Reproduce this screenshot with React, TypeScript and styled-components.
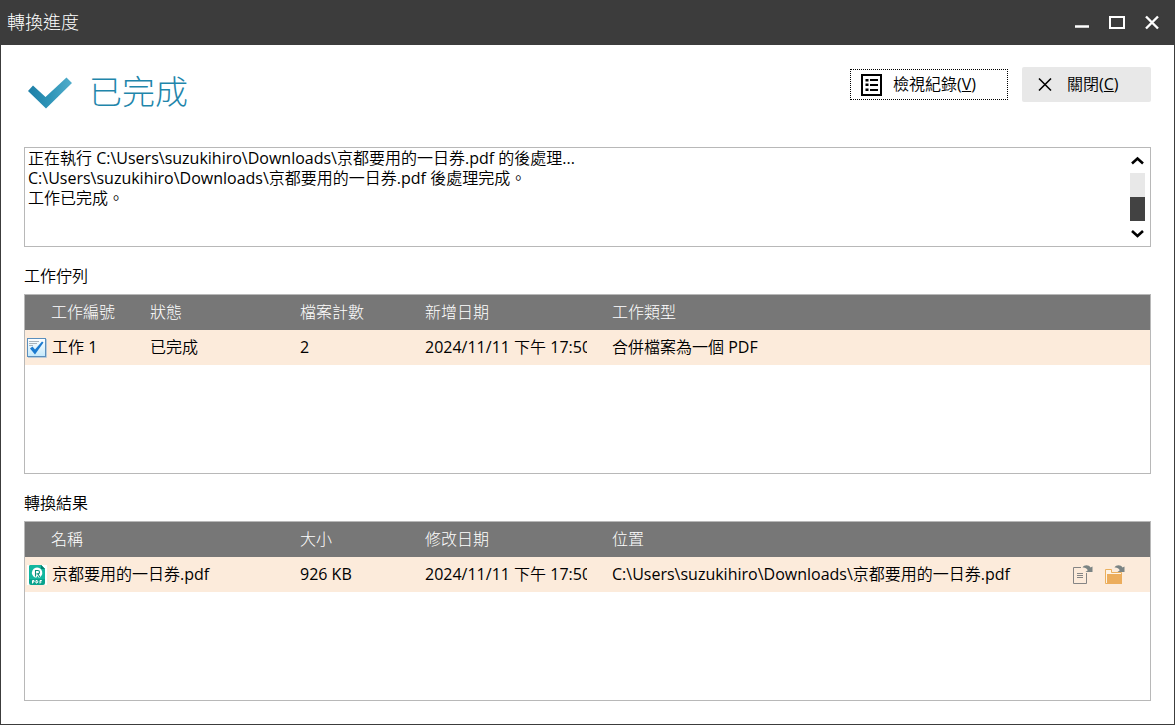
import React from "react";
import styled, { createGlobalStyle } from "styled-components";

const GlobalStyle = createGlobalStyle`
  *, *::before, *::after { box-sizing: border-box; }
  body { margin: 0; background: #fff; }
  body, button, table {
    font-family: "Open Sans", "Noto Sans CJK TC", sans-serif;
    font-size: 16px;
    font-weight: 350;
    color: #000;
  }
`;

const Window = styled.div`
  min-height: 100vh;
  display: flex;
  flex-direction: column;
  border: 1px solid #3c3c3c;
  border-top: 0;
`;

const TitleBar = styled.header`
  height: 45px;
  flex: none;
  display: flex;
  align-items: center;
  justify-content: space-between;
  padding: 0 12px 0 6px;
  background: #3c3c3c;
`;

const WindowTitle = styled.h1`
  margin: 0;
  padding-bottom: 2px;
  font-size: 18px;
  font-weight: 300;
  line-height: 24px;
  color: #fff;
`;

const WindowControls = styled.div`
  display: flex;
  gap: 15px;
`;

const WindowButton = styled.button`
  display: block;
  width: 20px;
  height: 20px;
  padding: 0;
  border: 0;
  background: none;
  svg { display: block; }
`;

const Content = styled.main`
  flex: 1;
  display: flex;
  flex-direction: column;
  padding: 0 23px 23px;
`;

const StatusBar = styled.div`
  height: 102px;
  flex: none;
  display: flex;
  align-items: flex-start;
  justify-content: space-between;
  padding-top: 22px;
`;

const Status = styled.div`
  display: flex;
  align-items: center;
  gap: 17px;
  padding-left: 4px;
`;

const StatusText = styled.h2`
  margin: 0;
  font-size: 33px;
  font-weight: 300;
  line-height: 50px;
  color: #1f86ab;
`;

const Actions = styled.div`
  display: flex;
  align-items: center;
  gap: 14px;
`;

const ActionButton = styled.button<{ $focused?: boolean }>`
  display: flex;
  align-items: center;
  gap: ${(p) => (p.$focused ? 11 : 10)}px;
  width: ${(p) => (p.$focused ? 158 : 129)}px;
  height: ${(p) => (p.$focused ? 31 : 35)}px;
  padding: 0 10px;
  border: ${(p) => (p.$focused ? "1px dotted #000" : "0")};
  border-radius: ${(p) => (p.$focused ? 0 : 2)}px;
  background: ${(p) => (p.$focused ? "#fff" : "#e8e8e8")};
  line-height: 24px;
  white-space: nowrap;
  svg { flex: none; }
`;

const ButtonLabel = styled.span`
  padding-bottom: 2px;
`;

const Latin = styled.span`
  font-weight: 400;
`;

const LogBox = styled.div`
  height: 100px;
  flex: none;
  display: flex;
  justify-content: space-between;
  border: 1px solid #b8b8b8;
`;

const LogText = styled.div`
  min-width: 0;
  overflow: hidden;
  padding-left: 3px;
`;

const LogLine = styled.p`
  margin: 0;
  line-height: 20px;
  white-space: nowrap;
`;

const Scrollbar = styled.div`
  flex: none;
  width: 15px;
  margin-right: 5px;
  display: flex;
  flex-direction: column;
`;

const ScrollButton = styled.button`
  display: block;
  width: 15px;
  height: 25px;
  padding: 0;
  border: 0;
  background: none;
  svg { display: block; }
`;

const ScrollTrack = styled.div`
  flex: 1;
  display: flex;
  align-items: flex-end;
  background: #e8e8e8;
`;

const ScrollThumb = styled.div`
  width: 100%;
  height: 24px;
  background: #424242;
`;

const Section = styled.section`
  flex: 1 0 auto;
  display: flex;
  flex-direction: column;
`;

const SectionTitle = styled.h3`
  margin: 0;
  padding-top: 17px;
  height: 47px;
  font-size: 16px;
  font-weight: 350;
  line-height: 24px;
`;

const Panel = styled.div`
  flex: 1;
  min-height: 180px;
  border: 1px solid #b8b8b8;
`;

const Table = styled.table`
  width: 100%;
  table-layout: fixed;
  border-collapse: collapse;
`;

const Column = styled.col<{ $width?: number }>`
  width: ${(p) => (p.$width ? `${p.$width}px` : "auto")};
`;

const HeadCell = styled.th`
  height: 35px;
  padding: 0 8px 2px;
  background: #777;
  color: #fff;
  font-weight: 300;
  line-height: 24px;
  text-align: left;
  &:first-child { padding-left: 26px; }
`;

const Cell = styled.td`
  height: 35px;
  padding: 0 17px 2px 8px;
  background: #fcebdb;
  line-height: 24px;
  white-space: nowrap;
  &:first-child { padding: 0 0 0 2px; }
`;

const Clip = styled.div`
  overflow: hidden;
`;

const IconLabel = styled.div`
  display: flex;
  align-items: center;
  gap: 5px;
  svg { flex: none; }
  span { padding-bottom: 1px; }
`;

const Location = styled.div`
  display: flex;
  align-items: center;
  justify-content: space-between;
  padding-right: 8px;
`;

const RowActions = styled.div`
  display: flex;
  gap: 12px;
  padding-top: 2px;
`;

const RowButton = styled.button`
  display: block;
  width: 20px;
  height: 20px;
  padding: 0;
  border: 0;
  background: none;
  svg { display: block; }
`;

const BigCheck = () => (
  <svg width="44" height="50" viewBox="0 0 44 50" aria-hidden="true">
    <defs>
      <linearGradient id="check" x1="0" y1="0" x2="1" y2="0">
        <stop offset="0" stopColor="#1d7ea6" />
        <stop offset="0.5" stopColor="#2f95b8" />
        <stop offset="1" stopColor="#52adcb" />
      </linearGradient>
    </defs>
    <path d="M0 24 5 18.500 17.500 30 38.500 10.500 44 16 18 41.500Z" fill="url(#check)" />
  </svg>
);

const ListIcon = () => (
  <svg width="21" height="22" viewBox="0 0 21 22" aria-hidden="true">
    <rect x="1" y="1" width="19" height="20" fill="none" stroke="#000" strokeWidth="2" />
    <path d="M9 6h8M9 11h8M9 16h8" stroke="#000" strokeWidth="2" />
    <path d="M4.500 5h3v2.500h-3zM4.500 9.500h3v2.500h-3zM4.500 14.500h3v2.500h-3z" fill="#000" />
  </svg>
);

const CloseIcon = () => (
  <svg width="25" height="20" viewBox="0 0 25 20" aria-hidden="true">
    <path d="M7 3.500 19 15.500M19 3.500 7 15.500" stroke="#000" strokeWidth="1.600" />
  </svg>
);

const JobIcon = () => (
  <svg width="20" height="20" viewBox="0 0 20 20" aria-hidden="true">
    <defs>
      <linearGradient id="job" x1="0" y1="0" x2="0" y2="1">
        <stop offset="0" stopColor="#fff" />
        <stop offset="1" stopColor="#c4e9fb" />
      </linearGradient>
    </defs>
    <rect x="0.500" y="0.500" width="18" height="18" fill="url(#job)" stroke="#5b8fbd" />
    <path d="M19.500 1v18.500H1" fill="none" stroke="#b9cad8" />
    <path d="M2 3.500h10M2 5.500h8M2 7.500h4" stroke="#a9b3bb" />
    <path d="M3 10.500 5.500 8.500 8 11.500 15 3.500 16.500 4.500 8 16.500Z" fill="#1c7bd0" />
  </svg>
);

const PdfIcon = () => (
  <svg width="20" height="20" viewBox="0 0 20 20" aria-hidden="true">
    <rect width="20" height="20" fill="#fff" />
    <path d="M4 0h10l4 4v14a2 2 0 0 1-2 2H4a2 2 0 0 1-2-2V2a2 2 0 0 1 2-2Z" fill="#09a38d" />
    <path d="M4 0h10l4 4v10H2V2a2 2 0 0 1 2-2Z" fill="#13b69e" />
    <path d="M14 0v4h4Z" fill="#067e6d" />
    <path d="M8 12.500A5.200 5.200 0 1 1 14.500 10.500L13 12.500H11.500L10.500 10.500 9.500 12.500Z" fill="#fff" />
    <path d="M8.500 11.500V5.500h2.300a1.700 1.700 0 0 1 0 3.400H9.500M11 9l1.800 3" fill="none" stroke="#0a8f7c" strokeWidth="1.100" />
    <path d="M5.500 18.500v-3h1.500v1.500H5.500M9 15.500v2.500h1l.8-.8v-1L10 15.500ZM13 18.500v-3h1.800M13 17h1.500" fill="none" stroke="#fff" />
  </svg>
);

const JumpArrow = () => (
  <path d="M9.500 2.500C11-.5 16-.5 17.500 2.500L19.500 1.500V7H12.500L14.800 5.200C13.500 3 11.800 2.200 9.500 2.500Z" fill="#7b8484" />
);

const OpenFileIcon = () => (
  <svg width="20" height="20" viewBox="0 0 20 20" aria-hidden="true">
    <path d="M8 2.500H.5v16h13V8" fill="none" stroke="#858585" />
    <path d="M4 8.500h6M4 10.500h6M4 12.500h6" stroke="#858585" />
    <JumpArrow />
  </svg>
);

const OpenFolderIcon = () => (
  <svg width="20" height="20" viewBox="0 0 20 20" aria-hidden="true">
    <path d="M.5 18.500v-14h6v3h10v11Z" fill="#fdf3e6" stroke="#ebb05e" />
    <path d="M2 9h15v10H2z" fill="#ecad5c" />
    <JumpArrow />
  </svg>
);

const MinimizeIcon = () => (
  <svg width="20" height="20" viewBox="0 0 20 20" aria-hidden="true">
    <path d="M3 13.500h14" stroke="#fff" strokeWidth="2.500" />
  </svg>
);

const MaximizeIcon = () => (
  <svg width="20" height="20" viewBox="0 0 20 20" aria-hidden="true">
    <rect x="3" y="4" width="14" height="11" fill="none" stroke="#fff" strokeWidth="2" />
  </svg>
);

const WindowCloseIcon = () => (
  <svg width="20" height="20" viewBox="0 0 20 20" aria-hidden="true">
    <path d="M4 3.500 16 15.500M16 3.500 4 15.500" stroke="#fff" strokeWidth="2.400" />
  </svg>
);

const Chevron = ({ d }: { d: string }) => (
  <svg width="15" height="25" viewBox="0 0 15 25" aria-hidden="true">
    <path d={d} fill="none" stroke="#000" strokeWidth="2.600" />
  </svg>
);

const downloads = "C:\\Users\\suzukihiro\\Downloads\\";

const FilePath = () => (
  <>
    <Latin>{downloads}</Latin>京都要用的一日券<Latin>.pdf</Latin>
  </>
);

const DateTime = () => (
  <Clip>
    <Latin>2024/11/11 </Latin>下午<Latin> 17:50</Latin>
  </Clip>
);

export default function App() {
  return (
    <Window lang="zh-Hant">
      <GlobalStyle />
      <TitleBar>
        <WindowTitle>轉換進度</WindowTitle>
        <WindowControls>
          <WindowButton aria-label="最小化"><MinimizeIcon /></WindowButton>
          <WindowButton aria-label="最大化"><MaximizeIcon /></WindowButton>
          <WindowButton aria-label="關閉視窗"><WindowCloseIcon /></WindowButton>
        </WindowControls>
      </TitleBar>
      <Content>
        <StatusBar>
          <Status>
            <BigCheck />
            <StatusText>已完成</StatusText>
          </Status>
          <Actions>
            <ActionButton $focused>
              <ListIcon />
              <ButtonLabel>檢視紀錄<Latin>(<u>V</u>)</Latin></ButtonLabel>
            </ActionButton>
            <ActionButton>
              <CloseIcon />
              <ButtonLabel>關閉<Latin>(<u>C</u>)</Latin></ButtonLabel>
            </ActionButton>
          </Actions>
        </StatusBar>
        <LogBox>
          <LogText role="log">
            <LogLine>正在執行<Latin> </Latin><FilePath /><Latin> </Latin>的後處理<Latin>...</Latin></LogLine>
            <LogLine><FilePath /><Latin> </Latin>後處理完成。</LogLine>
            <LogLine>工作已完成。</LogLine>
          </LogText>
          <Scrollbar>
            <ScrollButton aria-label="向上捲動"><Chevron d="M2 15.500 7.500 10.500 13 15.500" /></ScrollButton>
            <ScrollTrack><ScrollThumb /></ScrollTrack>
            <ScrollButton aria-label="向下捲動"><Chevron d="M2 10 7.500 15 13 10" /></ScrollButton>
          </Scrollbar>
        </LogBox>
        <Section>
          <SectionTitle id="queue">工作佇列</SectionTitle>
          <Panel>
            <Table aria-labelledby="queue">
              <colgroup>
                <Column $width={117} />
                <Column $width={150} />
                <Column $width={125} />
                <Column $width={187} />
                <Column />
              </colgroup>
              <thead>
                <tr>
                  <HeadCell>工作編號</HeadCell>
                  <HeadCell>狀態</HeadCell>
                  <HeadCell>檔案計數</HeadCell>
                  <HeadCell>新增日期</HeadCell>
                  <HeadCell>工作類型</HeadCell>
                </tr>
              </thead>
              <tbody>
                <tr>
                  <Cell><IconLabel><JobIcon /><span>工作<Latin> 1</Latin></span></IconLabel></Cell>
                  <Cell>已完成</Cell>
                  <Cell><Latin>2</Latin></Cell>
                  <Cell><DateTime /></Cell>
                  <Cell>合併檔案為一個<Latin> PDF</Latin></Cell>
                </tr>
              </tbody>
            </Table>
          </Panel>
        </Section>
        <Section>
          <SectionTitle id="results">轉換結果</SectionTitle>
          <Panel>
            <Table aria-labelledby="results">
              <colgroup>
                <Column $width={267} />
                <Column $width={125} />
                <Column $width={187} />
                <Column />
              </colgroup>
              <thead>
                <tr>
                  <HeadCell>名稱</HeadCell>
                  <HeadCell>大小</HeadCell>
                  <HeadCell>修改日期</HeadCell>
                  <HeadCell>位置</HeadCell>
                </tr>
              </thead>
              <tbody>
                <tr>
                  <Cell><IconLabel><PdfIcon /><span>京都要用的一日券<Latin>.pdf</Latin></span></IconLabel></Cell>
                  <Cell><Latin>926 KB</Latin></Cell>
                  <Cell><DateTime /></Cell>
                  <Cell>
                    <Location>
                      <span><FilePath /></span>
                      <RowActions>
                        <RowButton aria-label="開啟檔案"><OpenFileIcon /></RowButton>
                        <RowButton aria-label="開啟資料夾"><OpenFolderIcon /></RowButton>
                      </RowActions>
                    </Location>
                  </Cell>
                </tr>
              </tbody>
            </Table>
          </Panel>
        </Section>
      </Content>
    </Window>
  );
}
